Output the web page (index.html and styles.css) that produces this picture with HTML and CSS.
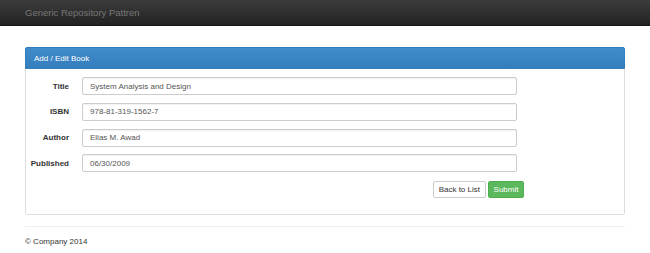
FILE: index.html
```html
<!DOCTYPE html>
<html lang="en">
<head>
    <meta charset="UTF-8">
    <title>Add / Edit Book</title>
    <link rel="stylesheet" href="styles.css">
</head>
<body>
    <div class="navbar">
        <a class="brand" href="#">Generic Repository Pattren</a>
    </div>
    <div class="container">
        <div class="panel">
            <div class="panel-heading">Add / Edit Book</div>
            <form class="panel-body">
                <div class="form-row">
                    <label for="title">Title</label>
                    <input id="title" type="text" value="System Analysis and Design">
                </div>
                <div class="form-row">
                    <label for="isbn">ISBN</label>
                    <input id="isbn" type="text" value="978-81-319-1562-7">
                </div>
                <div class="form-row">
                    <label for="author">Author</label>
                    <input id="author" type="text" value="Elias M. Awad">
                </div>
                <div class="form-row">
                    <label for="published">Published</label>
                    <input id="published" type="text" value="06/30/2009">
                </div>
                <div class="actions">
                    <button type="button" class="btn">Back to List</button>
                    <button type="submit" class="btn btn-success">Submit</button>
                </div>
            </form>
        </div>
        <hr>
        <footer>&copy; Company 2014</footer>
    </div>
</body>
</html>
```

FILE: styles.css
```css
body {
    margin: 0;
    font-family: "Liberation Sans", Arial, sans-serif;
    font-size: 8px;
    color: #333;
    background: #fff;
}
.navbar {
    height: 26px;
    background: linear-gradient(to bottom, #3c3c3c, #222);
    border-bottom: 1px solid #111;
    box-sizing: border-box;
}
.brand {
    display: block;
    padding-left: 25px;
    line-height: 26px;
    font-size: 9.5px;
    color: #777;
    text-decoration: none;
}
.container {
    padding: 21px 25px 0;
}
.panel {
    border: 1px solid #ddd;
    border-radius: 2px;
}
.panel-heading {
    height: 22px;
    line-height: 22px;
    padding: 0 8px;
    margin: -1px -1px 0;
    background: linear-gradient(to bottom, #428bca, #357ebd);
    border: 1px solid #357ebd;
    border-radius: 2px 2px 0 0;
    color: #fff;
    box-sizing: border-box;
}
.panel-body {
    width: 498px;
    padding: 8px 0 16px;
    margin: 0;
}
.form-row {
    display: flex;
    align-items: center;
    gap: 13px;
    margin-bottom: 7.8px;
}
.form-row label {
    width: 43px;
    text-align: right;
    font-weight: bold;
    color: #333;
}
.form-row input {
    width: 435px;
    height: 18px;
    box-sizing: border-box;
    padding: 0 7px;
    border: 1px solid #ccc;
    border-radius: 2px;
    font-family: inherit;
    font-size: 8px;
    color: #555;
    box-shadow: inset 0 1px 1px rgba(0, 0, 0, 0.06);
}
.actions {
    display: flex;
    justify-content: flex-end;
    gap: 2px;
    margin-top: 9px;
}
.btn {
    height: 17px;
    padding: 0 5px;
    border: 1px solid #ccc;
    border-radius: 2px;
    background: #fff;
    color: #333;
    font-family: inherit;
    font-size: 8px;
    cursor: pointer;
}
.btn-success {
    background: #5cb85c;
    border-color: #4cae4c;
    color: #fff;
    padding: 0 4px;
    width: 36px;
}
hr {
    margin: 11px 0 0;
    border: 0;
    border-top: 1px solid #eee;
}
footer {
    padding-top: 10px;
    font-size: 8px;
    color: #333;
}
```
